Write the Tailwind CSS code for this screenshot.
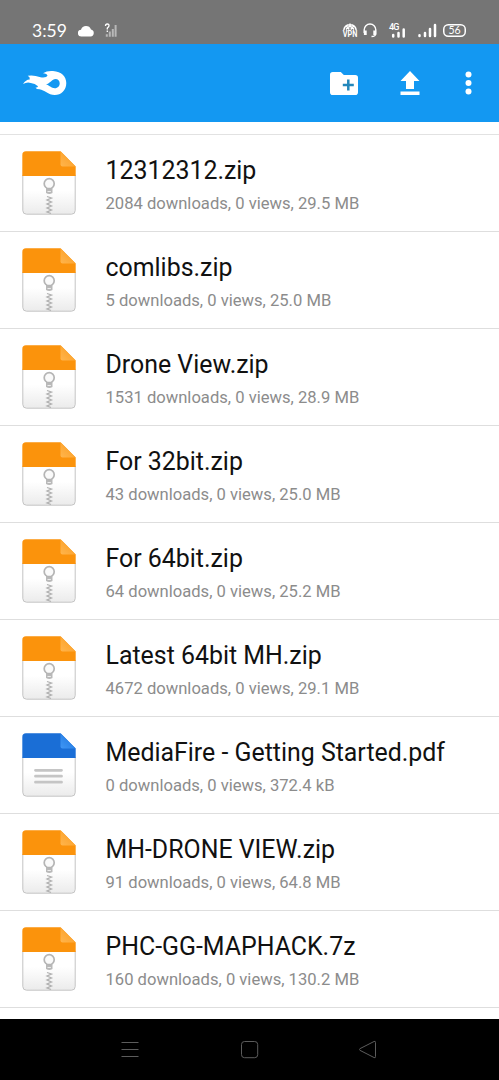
<!DOCTYPE html>
<html lang="en">
<head>
<meta charset="utf-8">
<title>MediaFire</title>
<script src="https://cdn.jsdelivr.net/npm/@tailwindcss/browser@4"></script>
</head>
<body class="bg-white">
<svg class="absolute size-0">
  <defs>
    <linearGradient id="paper" x1="0" y1="0" x2="0" y2="1"><stop offset=".4" stop-color="#fff"/><stop offset="1" stop-color="#ebebeb"/></linearGradient>
    <linearGradient id="foldO" x1="0" y1="1" x2="1" y2="0"><stop offset="0" stop-color="#ffb54d"/><stop offset="1" stop-color="#fb9a1c"/></linearGradient>
    <linearGradient id="foldB" x1="0" y1="1" x2="1" y2="0"><stop offset="0" stop-color="#3f96f5"/><stop offset="1" stop-color="#1c74dc"/></linearGradient>
  </defs>
  <symbol id="zip" viewBox="0 0 54 64">
    <path d="M.8 24V59.500Q.8 63.200 4.500 63.200H49.500Q53.200 63.200 53.200 59.500V24Z" fill="url(#paper)" stroke="#c4c4c4"/>
    <path d="M.3 25V4Q.3.300 4 .300H38.500L53.700 15.500V25Z" fill="#fb930c"/>
    <path d="M38.500.300L53.700 15.500H40.500Q38.500 15.500 38.500 13.500Z" fill="url(#foldO)"/>
    <path d="M24 35.500h6.500v6.500q-3.200 1.800-6.500 0Z" fill="#b9b9b9"/>
    <circle cx="27.200" cy="32.700" r="5" fill="#fafafa" stroke="#b5b5b5" stroke-width="1.700"/>
    <path d="M25.500 40.500h3.400" stroke="#eee"/>
    <path d="M25 45.500l4.500 1.500-4.500 2 4.500 2-4.500 2 4.500 2-4.500 2 4.500 2-4.500 2 4 1.500" fill="none" stroke="#b0b0b0" stroke-width="1.300"/>
  </symbol>
  <symbol id="pdf" viewBox="0 0 54 64">
    <path d="M.8 24V59.500Q.8 63.200 4.500 63.200H49.500Q53.200 63.200 53.200 59.500V24Z" fill="url(#paper)" stroke="#c4c4c4"/>
    <path d="M.3 25V4Q.3.300 4 .300H38.500L53.700 15.500V25Z" fill="#1a6ed6"/>
    <path d="M38.500.300L53.700 15.500H40.500Q38.500 15.500 38.500 13.500Z" fill="url(#foldB)"/>
    <path d="M13.500 37.300h26M13.500 43.200h26M13.500 49.200h26" stroke="#c5c5c5" stroke-width="2.800" stroke-linecap="round"/>
  </symbol>
</svg>
<div class="flex h-[1080px] w-[499px] flex-col overflow-hidden bg-white font-['Roboto',sans-serif]">
  <div class="flex h-11 shrink-0 items-start bg-[#757575] pl-8 text-white">
    <span class="mt-[19px] w-[46px] font-['Lato',sans-serif] text-[17.500px] leading-6">3:59</span>
    <svg class="mt-[24px] h-[13px] w-4" viewBox="0 0 16 13"><path d="M3.500 12.500a3.400 3.400 0 0 1-.5-6.800A5.300 5.300 0 0 1 13 5.600a3.500 3.500 0 0 1-.4 6.900Z" fill="#fff"/></svg>
    <svg class="ml-[10px] mt-[22px] h-4 w-[15px]" viewBox="0 0 15 16" fill="none"><path d="M2.800 14.800v-2.600M5.800 14.800V9.500M8.800 14.800V7M11.600 14.800V3" stroke="#b8b8b8" stroke-width="2"/><path d="M1.500 4Q1.500 2 3.300 2T5 3.800Q5 5 3.300 6V7.400M3.300 8.600V10" stroke="#fff" stroke-width="1.300"/></svg>
    <svg class="ml-[223px] mt-[22px] h-[20px] w-4 overflow-visible" viewBox="0 0 16 20" fill="none" stroke="#fff"><path d="M1.800 8a6.300 6.300 0 0 1 12.400 0M4 3.800l3.300 3.700M12 3.800 8.700 7.500M8 1.500v2.500M4 7.500q4-6 8 0" stroke-width="1.500"/><text x="8" y="15.300" text-anchor="middle" fill="#fff" stroke="none" font-family="Roboto" font-weight="700" font-size="9" textLength="14.500" lengthAdjust="spacingAndGlyphs">VPN</text></svg>
    <svg class="ml-[5px] mt-[23px] h-[15px] w-[14px]" viewBox="0 0 14 15" fill="none" stroke="#fff"><path d="M1.200 10V6.800a5.800 5.800 0 0 1 11.600 0V11Q12.500 13.500 8.500 13.500" stroke-width="1.400"/><path d="M2.300 7.500v4.500M11.700 7.500V12" stroke-width="2.800"/></svg>
    <svg class="ml-[12px] mt-[22px] h-4 w-[18px] overflow-visible" viewBox="0 0 18 16"><text x="0" y="8" fill="#fff" font-family="Roboto" font-weight="500" font-size="9" textLength="10.500">4G</text><path d="M4.200 14.500v-1.500M9.500 14.500V11M14.700 14.500V7.500" stroke="#fff" stroke-width="2.500" stroke-linecap="round"/></svg>
    <svg class="ml-[10px] mt-[22px] h-4 w-5" viewBox="0 0 20 16"><path d="M2.500 14v-.8M8 14v-3M13 14V7M18 14V3" stroke="#fff" stroke-width="2.500" stroke-linecap="round"/></svg>
    <svg class="ml-[6px] mt-6 h-[13px] w-[23px] overflow-visible" viewBox="0 0 23 13"><rect x=".75" y=".75" width="21.500" height="11.500" rx="4.500" fill="none" stroke="#fff" stroke-width="1.500"/><text x="11.500" y="10.300" text-anchor="middle" fill="#fff" font-family="Lato" font-size="10.500">56</text></svg>
  </div>
  <header class="flex h-[78px] shrink-0 items-center bg-[#1398f2]">
    <svg class="ml-[22px] h-[26px] w-[45px]" viewBox="0 0 45 26">
      <path fill="#fff" fill-rule="evenodd" d="M1 14Q4 9.200 7.800 9.400Q8.200 7 5.700 5.800Q11 4.500 18.500 7.200Q24.500 8 25.500 5.500Q25 3.500 21 3.200Q25 .5 31 1C39.500 1.500 44.300 6.500 44.300 13C44.300 20.500 39 25 32.800 25C26 25 22.500 20 17.500 19.300Q14.500 19.300 13.500 17.700Q16 17.500 16 16.200Q13 13 8.800 12.900Q5 11.700 1 14ZM24 14.500C27 15 29.500 18.200 32.800 18.200C36 18.200 37.700 15.800 37.700 13.200C37.700 10.700 36 9 33.500 9C30 9 28 13.500 24 14.500Z"/>
    </svg>
    <svg class="ml-[263px] h-[23px] w-7" viewBox="0 0 28 23"><path fill="#fff" d="M2.800 0h8l3 3H25.200Q28 3 28 5.800V20.200Q28 23 25.200 23H2.800Q0 23 0 20.200V2.800Q0 0 2.800 0Z"/><path d="M18.300 7.500v11M12.800 13h11" stroke="#2387bb" stroke-width="2.500"/></svg>
    <svg class="ml-[42px] h-6 w-5" viewBox="0 0 20 24" fill="#fff"><path d="M10 0 19.500 10H14V18H6V10H.5ZM.5 20.500h19V24H.5Z"/></svg>
    <svg class="ml-[45px] h-6 w-[7px]" viewBox="0 0 7 24" fill="#fff"><circle cx="3.500" cy="3.500" r="3"/><circle cx="3.500" cy="12" r="3"/><circle cx="3.500" cy="20.500" r="3"/></svg>
  </header>
  <main class="flex h-[897px] shrink-0 flex-col overflow-hidden bg-white pt-3">
    <div class="h-px shrink-0 bg-[#e2e2e2]"></div>
    <div id="files" class="flex flex-col"></div>
  </main>
  <nav class="flex h-[61px] shrink-0 items-center bg-black text-[#5c5c5c]">
    <svg class="ml-[121px] h-[18px] w-[18px]" viewBox="0 0 18 18" stroke="currentColor"><path d="M.5 1.500h17M.5 8.500h17M.5 15.500h17"/></svg>
    <svg class="ml-[102px] h-[18px] w-[18px]" viewBox="0 0 18 18" fill="none" stroke="currentColor"><rect x=".5" y=".5" width="16.200" height="16.200" rx="3"/></svg>
    <svg class="ml-[100px] h-5 w-[18px]" viewBox="0 0 18 20" fill="none" stroke="currentColor" stroke-linejoin="round"><path d="M15 1.500Q16.500.7 16.500 2.500V16.500Q16.500 18.500 15 17.500L.9 10.300Q0 9.500.9 8.700Z"/></svg>
  </nav>
</div>
<script>
const files = [
  ['zip', '12312312.zip', '2084 downloads, 0 views, 29.5 MB'],
  ['zip', 'comlibs.zip', '5 downloads, 0 views, 25.0 MB'],
  ['zip', 'Drone View.zip', '1531 downloads, 0 views, 28.9 MB'],
  ['zip', 'For 32bit.zip', '43 downloads, 0 views, 25.0 MB'],
  ['zip', 'For 64bit.zip', '64 downloads, 0 views, 25.2 MB'],
  ['zip', 'Latest 64bit MH.zip', '4672 downloads, 0 views, 29.1 MB'],
  ['pdf', 'MediaFire - Getting Started.pdf', '0 downloads, 0 views, 372.4 kB'],
  ['zip', 'MH-DRONE VIEW.zip', '91 downloads, 0 views, 64.8 MB'],
  ['zip', 'PHC-GG-MAPHACK.7z', '160 downloads, 0 views, 130.2 MB']
];
document.getElementById('files').innerHTML = files.map(([icon, name, info]) => `
  <div class="flex h-[97px] shrink-0 items-start border-b border-[#dedede] pl-[21.500px] pt-4">
    <svg class="h-[64px] w-[54px] shrink-0"><use href="#${icon}"/></svg>
    <div class="ml-[30px] flex flex-col pt-[5px] whitespace-nowrap">
      <span class="text-[24.900px] leading-[30px] text-[#111]">${name}</span>
      <span class="mt-[8px] text-[16.600px] leading-5 text-[#8c8c8c]">${info}</span>
    </div>
  </div>`).join('');
</script>
</body>
</html>
